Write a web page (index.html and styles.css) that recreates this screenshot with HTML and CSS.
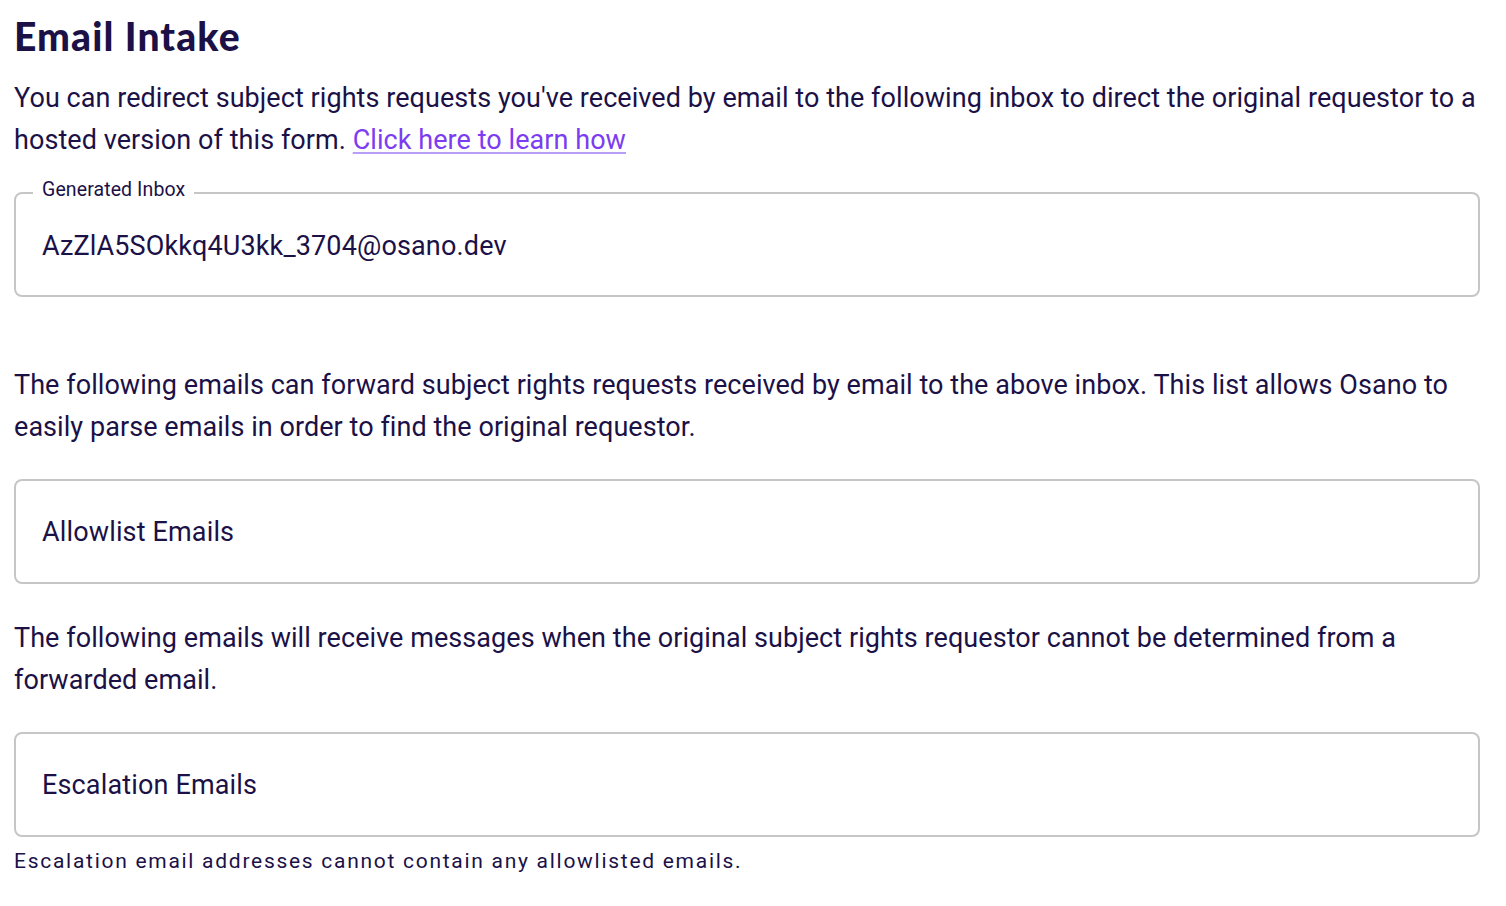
FILE: index.html
```html
<!DOCTYPE html>
<html>
<head>
<meta charset="utf-8">
<link rel="stylesheet" href="styles.css">
</head>
<body>
<main class="page">
  <h1 class="title">Email Intake</h1>
  <p class="text">You can redirect subject rights requests you've received by email to the following inbox to direct the original requestor to a hosted version of this form. <a class="link" href="#">Click here to learn how</a></p>
  <fieldset class="field field-first">
    <legend class="legend">Generated Inbox</legend>
    <div class="value">AzZlA5SOkkq4U3kk_3704@osano.dev</div>
  </fieldset>
  <p class="text text-gap">The following emails can forward subject rights requests received by email to the above inbox. This list allows Osano to easily parse emails in order to find the original requestor.</p>
  <div class="field">
    <div class="value">Allowlist Emails</div>
  </div>
  <p class="text">The following emails will receive messages when the original subject rights requestor cannot be determined from a forwarded email.</p>
  <div class="field field-last">
    <div class="value">Escalation Emails</div>
  </div>
  <p class="helper">Escalation email addresses cannot contain any allowlisted emails.</p>
</main>
</body>
</html>
```
FILE: styles.css
```css
html, body {
  margin: 0;
  padding: 0;
  background: #ffffff;
}
.page {
  padding: 12px 26px 20px 14px;
  font-family: Roboto, "Liberation Sans", sans-serif;
  color: #1b1147;
}
.title {
  margin: 0;
  font-family: Lato, "Liberation Sans", sans-serif;
  font-weight: 900;
  font-size: 39px;
  line-height: 48px;
  color: #1b1147;
  letter-spacing: 1.1px;
}
.text {
  margin: 17px 0 31px 0;
  font-size: 27px;
  line-height: 42px;
  letter-spacing: 0.06px;
}
.text-gap {
  margin-top: 67px;
}
.link {
  color: #7b3cf2;
  text-decoration: underline;
  text-decoration-color: #b89ef7;
  text-underline-offset: 3px;
}
.field {
  box-sizing: border-box;
  margin: 0 0 33px 0;
  border: 2px solid #c6c6c6;
  border-radius: 8px;
  height: 105px;
  padding: 0 26px;
  display: flex;
  align-items: center;
  min-width: 0;
}
.field-last {
  margin-bottom: 12px;
}
.field-first {
  margin: 0;
  height: 118px;
  margin-top: -13px;
  padding: 0 26px 10px 26px;
  display: block;
}
.legend {
  font-size: 19.5px;
  padding: 0 9px 6px 9px;
  margin-left: -9px;
  line-height: 22px;
  color: #1b1147;
  letter-spacing: 0.1px;
}
.field-first .value {
  margin-top: 24px;
}
.value {
  font-size: 27px;
  line-height: 30px;
  letter-spacing: 0.15px;
  color: #1b1147;
}
.helper {
  margin: 0;
  font-size: 21px;
  line-height: 24px;
  letter-spacing: 1.72px;
}
```
